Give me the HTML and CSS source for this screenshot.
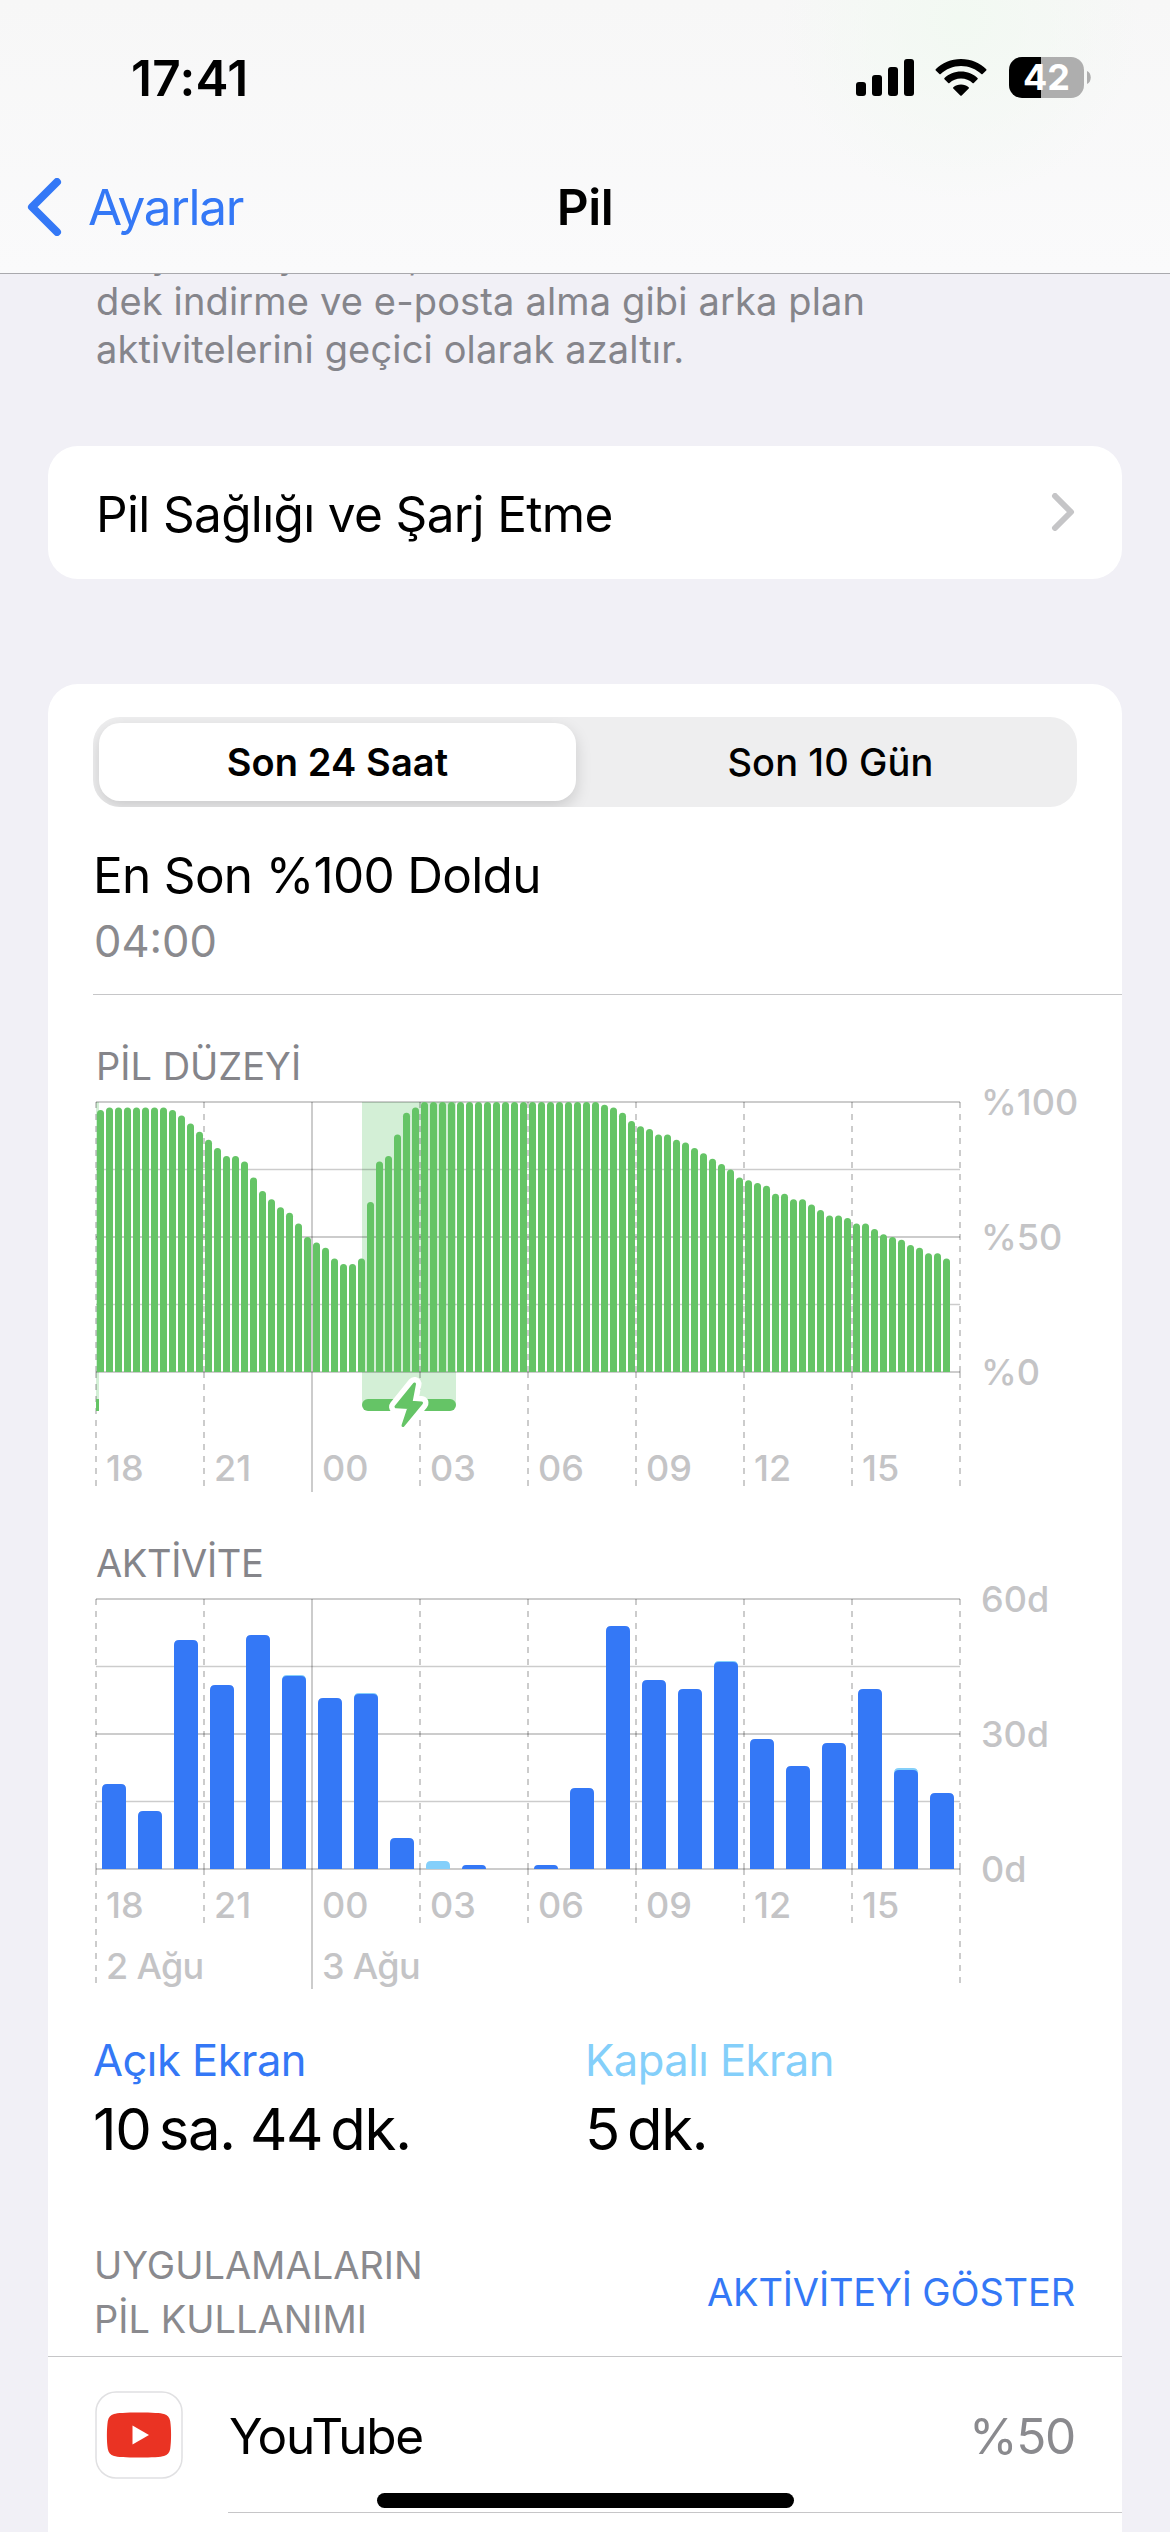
FILE: index.html
```
<!DOCTYPE html>
<html lang="tr">
<head>
    <meta charset="UTF-8">
    <title>Pil</title>
    <link rel="stylesheet" href="styles.css">
</head>
<body>
    <header class="header">
        <div class="status-bar">
            <span class="clock">17:41</span>
            <div class="status-icons">
                <svg class="signal" width="58" height="37" viewBox="0 0 58 37">
                    <rect x="0" y="23" width="10" height="14" rx="3"/>
                    <rect x="16" y="16" width="10" height="21" rx="3"/>
                    <rect x="32" y="8" width="10" height="29" rx="3"/>
                    <rect x="48" y="0" width="10" height="37" rx="3"/>
                </svg>
                <svg class="wifi" width="52" height="37" viewBox="0 0 52 37">
                    <path d="M26 0C36 0 45 4 51.300 10.200Q51.800 10.900 51.200 11.500L47.600 15.100Q47 15.600 46.300 15C41 10 34 7 26 7S11 10 5.700 15Q5 15.600 4.400 15.100L.8 11.500Q.2 10.900.7 10.200C7 4 16 0 26 0Z"/>
                    <path d="M26 12.500C32.500 12.500 38.300 15 42.500 19Q43.200 19.700 42.500 20.300L38.800 24Q38.200 24.600 37.500 24C34.500 21.200 30.500 19.500 26 19.500S17.500 21.200 14.500 24Q13.800 24.600 13.200 24L9.500 20.300Q8.800 19.700 9.500 19C13.700 15 19.500 12.500 26 12.500Z"/>
                    <path d="M26 25.500C29 25.500 31.600 26.500 33.600 28.200Q34.300 28.900 33.700 29.500L26.700 36.500Q26 37.100 25.300 36.500L18.300 29.500Q17.700 28.900 18.400 28.200C20.400 26.500 23 25.500 26 25.500Z"/>
                </svg>
                <div class="battery"><span>42</span></div>
                <svg class="battery-cap" width="4" height="13" viewBox="0 0 4 13"><path d="M0 0C5 2 5 11 0 13Z"/></svg>
            </div>
        </div>
        <div class="nav-bar">
            <a class="back">
                <svg width="36" height="58" viewBox="0 0 36 58"><path d="M31 4L6 29L31 54"/></svg>
                <span>Ayarlar</span>
            </a>
            <h1>Pil</h1>
        </div>
    </header>

    <main class="content">
        <p class="footnote"><span class="footnote-top">Düşük Güç Modu, tam olarak dolana</span><br>dek indirme ve e-posta alma gibi arka plan<br>aktivitelerini geçici olarak azaltır.</p>

        <div class="card link-row">
            <span>Pil Sağlığı ve Şarj Etme</span>
            <svg width="24" height="38" viewBox="0 0 24 38"><path d="M4 3L20 19L4 35"/></svg>
        </div>

        <div class="card usage">
            <div class="segmented">
                <div class="segment active">Son 24 Saat</div>
                <div class="segment">Son 10 Gün</div>
            </div>

            <div class="last-charge">
                <div class="last-charge-title">En Son %100 Doldu</div>
                <div class="last-charge-time">04:00</div>
            </div>

            <h2 class="chart-title level-title">PİL DÜZEYİ</h2>
            <div class="chart level-chart">
                <div class="plot">
                    <svg id="levelPlot" width="866" height="392" viewBox="-1 -1 866 392"></svg>
                    <div class="hours">
                        <span>18</span><span>21</span><span>00</span><span>03</span><span>06</span><span>09</span><span>12</span><span>15</span>
                    </div>
                </div>
                <div class="scale">
                    <span>%100</span><span>%50</span><span>%0</span>
                </div>
            </div>

            <h2 class="chart-title activity-title">AKTİVİTE</h2>
            <div class="chart activity-chart">
                <div class="plot">
                    <svg id="activityPlot" width="866" height="392" viewBox="-1 -1 866 392"></svg>
                    <div class="hours">
                        <span>18</span><span>21</span><span>00</span><span>03</span><span>06</span><span>09</span><span>12</span><span>15</span>
                    </div>
                    <div class="days">
                        <span>2 Ağu</span><span>3 Ağu</span>
                    </div>
                </div>
                <div class="scale">
                    <span>60d</span><span>30d</span><span>0d</span>
                </div>
            </div>

            <div class="totals">
                <div class="total">
                    <div class="total-label screen-on">Açık Ekran</div>
                    <div class="total-value">10<i></i>sa. 44<i></i>dk.</div>
                </div>
                <div class="total">
                    <div class="total-label screen-off">Kapalı Ekran</div>
                    <div class="total-value">5<i></i>dk.</div>
                </div>
            </div>

            <div class="apps-header">
                <h2>UYGULAMALARIN<br>PİL KULLANIMI</h2>
                <a>AKTİVİTEYİ GÖSTER</a>
            </div>

            <div class="app-row">
                <svg class="app-icon" width="88" height="88" viewBox="0 0 88 88">
                    <rect x="1" y="1" width="86" height="86" rx="20" fill="#fff" stroke="#e0e0e2" stroke-width="1.500"/>
                    <path d="M44 21.500C57 21.500 66 22 69 23C72.500 24 74.500 26.500 75.200 30C76.400 38 76.400 50 75.200 58C74.500 61.500 72.500 64 69 65C66 66 57 66.500 44 66.500S22 66 19 65C15.500 64 13.500 61.500 12.800 58C11.600 50 11.600 38 12.800 30C13.500 26.500 15.500 24 19 23C22 22 31 21.500 44 21.500Z" fill="#ea3323"/>
                    <path d="M37.500 34.500L54 44L37.500 53.500Z" fill="#fff"/>
                </svg>
                <div class="app-info">
                    <span class="app-name">YouTube</span>
                    <span class="app-percent">%50</span>
                </div>
            </div>
        </div>
    </main>
    <div class="home-indicator"></div>

    <script src="script.js"></script>
</body>
</html>
```
FILE: styles.css
```
* {
    box-sizing: border-box;
}
body {
    margin: 0;
    width: 1170px;
    height: 2532px;
    overflow: hidden;
    background-color: #f1f0f6;
    color: #000;
    font-family: Inter, "Liberation Sans", sans-serif;
    font-size: 49.500px;
}
h1, h2, p {
    margin: 0;
    font-weight: 400;
}
.header {
    position: relative;
    z-index: 1;
    height: 274px;
    background: radial-gradient(circle at 960px 20px, #f2f9f2 0, rgba(249, 249, 249, 0) 180px), linear-gradient(#f7f7f7, #fafafb);
    border-bottom: 1px solid #a9a9ad;
}
.status-bar {
    display: flex;
    justify-content: space-between;
    height: 141px;
    padding: 57px 79px 0 131px;
}
.clock {
    height: 42px;
    line-height: 42px;
    font-weight: 600;
    letter-spacing: 0.3px;
}
.status-icons {
    display: flex;
    align-items: center;
    height: 41px;
}
.wifi {
    margin: 0 22px 0 21px;
}
.battery {
    width: 75px;
    height: 41px;
    border-radius: 13px;
    background: linear-gradient(90deg, #000 32px, #aeaeae 32px);
    color: #fff;
    font-size: 36px;
    font-weight: 700;
    line-height: 41px;
    text-align: center;
}
.battery-cap {
    margin-left: 3px;
    fill: #aeaeae;
}
.nav-bar {
    display: grid;
    grid-template-columns: 1fr auto 1fr;
    align-items: center;
    height: 132px;
    line-height: 44px;
}
.back {
    display: flex;
    align-items: center;
    gap: 26px;
    padding-left: 26px;
    color: #3478f6;
    letter-spacing: -1.250px;
}
.back svg {
    fill: none;
    stroke: #3478f6;
    stroke-width: 8;
    stroke-linecap: round;
    stroke-linejoin: round;
}
.nav-bar h1 {
    font-size: 49.500px;
    font-weight: 600;
    letter-spacing: -0.5px;
}
.content {
    padding: 0 48px;
}
.footnote {
    margin-top: -45px;
    padding-left: 48px;
    color: #85858b;
    font-size: 38px;
    line-height: 48px;
    letter-spacing: 0.15px;
}
/* scrolled under the header, only the descenders stay visible */
.footnote-top {
    position: relative;
    top: 2px;
}
.card {
    background-color: #fff;
    border-radius: 30px;
}
.link-row {
    display: flex;
    justify-content: space-between;
    align-items: center;
    height: 133px;
    margin-top: 73px;
    padding: 2px 47px 0 48px;
    letter-spacing: -0.650px;
}
.link-row svg {
    margin-top: -3px;
    fill: none;
    stroke: #c5c5c7;
    stroke-width: 6;
    stroke-linecap: round;
    stroke-linejoin: round;
}
.usage {
    height: 1900px;
    margin-top: 105px;
    padding: 33px 0 0 45px;
}
.segmented {
    display: grid;
    grid-template-columns: 477px 1fr;
    width: 984px;
    height: 90px;
    padding: 6px;
    border-radius: 27px;
    background-color: #eeeeef;
    overflow: hidden;
}
.segment {
    padding-left: 14px;
    font-size: 38px;
    font-weight: 500;
    line-height: 78px;
    letter-spacing: 0.1px;
    text-align: center;
}
.segment.active {
    padding-left: 0;
    border-radius: 21px;
    background-color: #fff;
    box-shadow: 0 6px 16px rgba(0, 0, 0, 0.15);
    font-weight: 600;
}
.last-charge {
    height: 188px;
    padding: 36px 0 0 0;
    border-bottom: 1px solid #c6c6c8;
}
.last-charge-title {
    line-height: 64px;
    letter-spacing: -0.7px;
}
.last-charge-time {
    padding-left: 1px;
    color: #8a8a8e;
    font-size: 43.500px;
    line-height: 68px;
}
.chart-title {
    padding-left: 3px;
    color: #85858a;
    font-size: 38px;
    line-height: 48px;
}
.level-title {
    margin-top: 47px;
}
.activity-title {
    margin-top: 46px;
    letter-spacing: -0.350px;
}
.chart {
    display: flex;
    height: 392px;
    margin-top: 11px;
    padding-left: 2px;
    color: #c4c4c6;
    font-size: 36px;
    font-weight: 500;
}
.plot {
    display: grid;
    width: 866px;
}
.plot svg, .hours, .days {
    grid-area: 1 / 1;
}
.hours {
    display: grid;
    grid-template-columns: repeat(8, 108px);
    padding-top: 347px;
    line-height: 40px;
}
.hours span, .days span {
    padding-left: 11px;
}
.activity-chart .hours {
    padding-top: 287px;
}
.days {
    display: grid;
    grid-template-columns: 216px 648px;
    padding-top: 348px;
    line-height: 40px;
    letter-spacing: -0.7px;
}
.scale {
    display: flex;
    flex-direction: column;
    justify-content: space-between;
    height: 310px;
    margin: -19px 0 0 20px;
    line-height: 40px;
}
.totals {
    display: grid;
    grid-template-columns: 492px 1fr;
    height: 136px;
    margin-top: 40px;
}
.total-label {
    font-size: 43.500px;
    line-height: 60px;
    letter-spacing: -0.5px;
}
.screen-on {
    color: #3478f6;
}
.screen-off {
    color: #84cffa;
}
.total-value {
    font-size: 58px;
    line-height: 78px;
    letter-spacing: -1.250px;
}
.total-value i {
    display: inline-block;
    width: 8px;
}
.apps-header {
    display: flex;
    justify-content: space-between;
    align-items: center;
    height: 191px;
    margin: 0 0 0 -45px;
    padding: 61px 47px 0 46px;
    border-bottom: 1px solid #c6c6c8;
    font-size: 38px;
}
.apps-header h2 {
    color: #8a8a8e;
    font-size: 38px;
    line-height: 54px;
}
.apps-header a {
    color: #3478f6;
    letter-spacing: -0.150px;
}
.app-row {
    display: flex;
    align-items: center;
    gap: 45px;
    height: 156px;
    padding-left: 2px;
}
.app-info {
    display: flex;
    flex: 1;
    justify-content: space-between;
    align-items: center;
    height: 156px;
    padding: 2px 47px 0 1px;
    border-bottom: 1px solid #c6c6c8;
    letter-spacing: -1.300px;
}
.app-percent {
    color: #8a8a8e;
}
.home-indicator {
    position: absolute;
    left: 377px;
    top: 2493px;
    width: 417px;
    height: 15px;
    border-radius: 8px;
    background-color: #000;
}
```
FILE: script.js
```
// pil düzeyi (%), 15 dakikada bir
const levels = [
    97, 98, 98, 98, 98, 98, 98, 98, 97, 95, 92, 89,
    86, 83, 80, 80, 78, 72, 67, 64, 61, 59, 55, 50,
    48, 46, 42, 40, 40, 42, 63, 78, 80, 88, 96, 98,
    100, 100, 100, 100, 100, 100, 100, 100, 100, 100, 100, 100,
    100, 100, 100, 100, 100, 100, 100, 100, 99, 98, 96, 93,
    91, 90, 88, 88, 86, 85, 83, 81, 79, 77, 75, 72,
    71, 70, 69, 66, 66, 64, 64, 62, 60, 58, 58, 57,
    55, 55, 53, 51, 50, 49, 47, 46, 44, 44, 42
];

// saatlik aktivite: [toplam yükseklik, kapalı ekran payı]
const activity = [
    [85, 0], [58, 0], [229, 0], [184, 0], [234, 0], [194, 1],
    [171, 0], [176, 1], [31, 0], [8, 8], [4, 0], [0, 0],
    [4, 0], [81, 0], [243, 0], [189, 0], [180, 0], [208, 1],
    [130, 0], [103, 0], [126, 0], [180, 0], [101, 2], [76, 0]
];

const GRID = 'rgba(0, 0, 0, 0.2)';

function drawGrid(lineEnd, edgeEnd, midnightEnd) {
    let out = '';
    for (let i = 0; i <= 4; i++) {
        const y = i * 67.5;
        out += `<path d="M0 ${y}H864" stroke="${GRID}" stroke-width="${i % 2 ? 1.3 : 2}"/>`;
    }
    for (let i = 0; i <= 8; i++) {
        const x = i * 108;
        if (i === 2) {
            out += `<path d="M${x} 0V${midnightEnd}" stroke="${GRID}" stroke-width="2"/>`;
            continue;
        }
        const end = (i === 0 || i === 8) ? edgeEnd : lineEnd;
        // kesik çizgi taban çizgisinde yeniden başlar
        out += `<path d="M${x} 0V270M${x} 270V${end}" stroke="${GRID}" stroke-width="2" stroke-dasharray="6 6"/>`;
    }
    return out;
}

function barPath(x, h, w, r) {
    r = Math.min(r, h);
    return `M${x} 270V${270 - h + r}q0 ${-r} ${r} ${-r}h${w - 2 * r}q${r} 0 ${r} ${r}V270Z`;
}

function drawLevels() {
    let out = '<path d="M0 0H3V297H0ZM266 0H360V303H266Z" fill="#d3efd6"/>';
    out += drawGrid(384, 384, 390);
    levels.forEach((v, i) => {
        out += `<path d="${barPath(1 + i * 9, v * 2.7, 7, 3.5)}" fill="#65c466"/>`;
    });
    out += '<rect x="0" y="297" width="3" height="12" fill="#65c466"/>';
    out += '<rect x="266" y="297" width="94" height="12" rx="6" fill="#65c466"/>';
    // şarj simgesi
    const bolt = 'M318.500 282L300 304.800L313 305.500L307 323.500L325.500 301L315 300.300Z';
    out += `<path d="${bolt}" fill="#fff" stroke="#fff" stroke-width="14" stroke-linejoin="round"/>`;
    out += `<path d="${bolt}" fill="#65c466" stroke="#65c466" stroke-width="3" stroke-linejoin="round"/>`;
    document.getElementById('levelPlot').innerHTML = out;
}

function drawActivity() {
    let out = drawGrid(324, 384, 390);
    activity.forEach(([h, off], i) => {
        if (!h) return;
        const x = 6 + i * 36;
        if (off) out += `<path d="${barPath(x, h, 24, 5)}" fill="#84cffa"/>`;
        if (h > off) out += `<path d="${barPath(x, h - off, 24, 5)}" fill="#3478f6"/>`;
    });
    document.getElementById('activityPlot').innerHTML = out;
}

drawLevels();
drawActivity();
```
